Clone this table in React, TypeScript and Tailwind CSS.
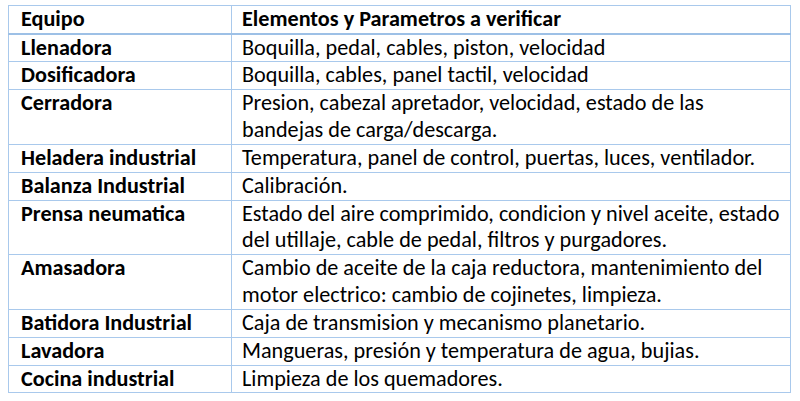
const ROWS: [string, string[]][] = [
  ["Llenadora", ["Boquilla, pedal, cables, piston, velocidad"]],
  ["Dosificadora", ["Boquilla, cables, panel tactil, velocidad"]],
  ["Cerradora", ["Presion, cabezal apretador, velocidad, estado de las", "bandejas de carga/descarga."]],
  ["Heladera industrial", ["Temperatura, panel de control, puertas, luces, ventilador."]],
  ["Balanza Industrial", ["Calibración."]],
  ["Prensa neumatica", ["Estado del aire comprimido, condicion y nivel aceite, estado", "del utillaje, cable de pedal, filtros y purgadores."]],
  ["Amasadora", ["Cambio de aceite de la caja reductora, mantenimiento del", "motor electrico: cambio de cojinetes, limpieza."]],
  ["Batidora Industrial", ["Caja de transmision y mecanismo planetario."]],
  ["Lavadora", ["Mangueras, presión y temperatura de agua, bujias."]],
  ["Cocina industrial", ["Limpieza de los quemadores."]],
];

const cell = "border border-[#a9c9ec] text-left align-top whitespace-nowrap";

export default function App() {
  return (
    <div className="w-[800px] h-[401px] bg-white pl-[8px] pt-[5px] text-black font-['Carlito','Calibri','Lato',sans-serif]">
      <table className="border-collapse table-fixed w-[783px] text-[22.2px] leading-[26.85px]">
        <colgroup>
          <col className="w-[223px]" />
          <col />
        </colgroup>
        <thead>
          <tr className="leading-[26.5px]">
            <th className={`${cell} border-b-2 border-b-[#9dc0e6] pl-[12px] font-bold`}>Equipo</th>
            <th className={`${cell} border-b-2 border-b-[#9dc0e6] pl-[10px] font-bold`}>Elementos y Parametros a verificar</th>
          </tr>
        </thead>
        <tbody>
          {ROWS.map(([eq, lines]) => (
            <tr key={eq}>
              <td className={`${cell} pl-[12px] font-bold`}>{eq}</td>
              <td className={`${cell} pl-[10px]`}>
                {lines.map((l) => (
                  <div key={l}>{l}</div>
                ))}
              </td>
            </tr>
          ))}
        </tbody>
      </table>
    </div>
  );
}
